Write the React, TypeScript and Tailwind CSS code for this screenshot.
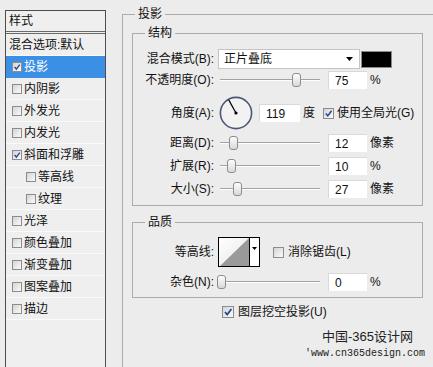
import React from "react";

const styleItems = [
  { label: "投影", checked: true, selected: true },
  { label: "内阴影" },
  { label: "外发光" },
  { label: "内发光" },
  { label: "斜面和浮雕", checked: true },
  { label: "等高线", sub: true },
  { label: "纹理", sub: true },
  { label: "光泽" },
  { label: "颜色叠加" },
  { label: "渐变叠加" },
  { label: "图案叠加" },
  { label: "描边" },
];

const CheckBox = ({ checked = false, size = "w-[10px] h-[10px]" }: { checked?: boolean; size?: string }) => (
  <span
    className={`${size} inline-flex shrink-0 items-center justify-center border border-[#8c8c8c] bg-gradient-to-br from-[#d4d4d4] to-[#fbfbfb]`}
  >
    {checked && (
      <svg viewBox="0 0 10 10" className="h-full w-full">
        <polyline points="2,5 4.2,7.6 8.4,2" fill="none" stroke="#24469a" strokeWidth="1.7" />
      </svg>
    )}
  </span>
);

const GroupTitle = ({ children }: { children: React.ReactNode }) => (
  <div className="-mt-[9px] ml-[12px] w-fit bg-[#ececec] px-[3px] leading-[16px]">{children}</div>
);

const Slider = ({ value }: { value: number }) => (
  <div className="relative ml-[6px] flex h-[20px] w-[100px] shrink-0 items-center">
    <div className="h-[2px] w-full border-t border-b border-t-[#a3a3a3] border-b-white" />
    <div
      className="absolute top-[3px] h-[14px] w-[9px] rounded-[3px] border border-[#8d8d8d] bg-gradient-to-b from-[#fdfdfd] to-[#d9d9d9]"
      style={{ left: `${value - 4}px` }}
    />
  </div>
);

const NumBox = ({ value, w = "w-[39px]", ml = "ml-[8px]" }: { value: string; w?: string; ml?: string }) => (
  <div className={`${ml} ${w} flex h-[18px] shrink-0 items-center border-t border-l border-[#d9d9d9] bg-white pl-[6px]`}>
    {value}
  </div>
);

const Label = ({ children }: { children: React.ReactNode }) => (
  <div className="w-[81px] shrink-0 text-right">{children}</div>
);

const SliderRow = ({ label, value, pos, unit }: { label: string; value: string; pos: number; unit: string }) => (
  <div className="mt-[3px] flex h-[20px] items-center">
    <Label>{label}</Label>
    <Slider value={pos} />
    <NumBox value={value} />
    <span className="ml-[3px]">{unit}</span>
  </div>
);

export default function App() {
  return (
    <div className="flex h-[367px] w-[433px] overflow-hidden bg-[#ececec] font-['Liberation_Sans','Noto_Sans_CJK_SC',sans-serif] text-[12px] text-[#111]">
      {/* style list */}
      <div className="mt-[10px] ml-[5px] h-[370px] w-[101px] shrink-0 border border-[#4d4d4d] bg-[#efefef]">
        <div className="flex h-[23px] items-center border-b-[3px] border-double border-[#6a6a6a] pl-[3px]">样式</div>
        <div className="flex h-[22px] items-center border-b border-[#fafafa] pl-[3px]">混合选项:默认</div>
        {styleItems.map((it) => (
          <div
            key={it.label}
            className={`flex h-[22px] items-center gap-[2px] border-b ${
              it.selected ? "border-[#3b8fe5] bg-[#3b8fe5] text-white" : "border-[#fafafa]"
            } ${it.sub ? "pl-[20px]" : "pl-[6px]"}`}
          >
            <CheckBox checked={it.checked} />
            <span>{it.label}</span>
          </div>
        ))}
      </div>

      {/* drop shadow group */}
      <div className="mt-[14px] ml-[16px] h-[370px] w-[320px] shrink-0 border border-[#ababab]">
        <GroupTitle>投影</GroupTitle>

        <div className="mt-[11px] ml-[9px] h-[173px] w-[291px] border border-[#ababab]">
          <GroupTitle>结构</GroupTitle>

          <div className="mt-[7px] flex h-[22px] items-center">
            <Label>混合模式(B):</Label>
            <div className="ml-[4px] flex h-[20px] w-[142px] shrink-0 items-center justify-between border border-[#c4c4c4] bg-white pr-[6px] pl-[5px]">
              <span>正片叠底</span>
              <svg width="7" height="4" viewBox="0 0 7 4">
                <polygon points="0,0 7,0 3.5,4" fill="#000" />
              </svg>
            </div>
            <div className="ml-[1px] h-[17px] w-[31px] shrink-0 border border-[#8a8a8a] bg-black" />
          </div>

          <div className="flex h-[20px] items-center">
            <Label>不透明度(O):</Label>
            <Slider value={76} />
            <NumBox value="75" />
            <span className="ml-[3px]">%</span>
          </div>

          <div className="mt-[6px] flex h-[34px] items-center">
            <Label>角度(A):</Label>
            <svg width="34" height="34" viewBox="0 0 34 34" className="ml-[5px] shrink-0">
              <circle cx="17" cy="17" r="15.6" fill="#f2f2f2" stroke="#4b5775" strokeWidth="1.6" />
              <line x1="17" y1="17" x2="9.7" y2="3.9" stroke="#000" strokeWidth="1.2" />
              <circle cx="17" cy="17" r="1.6" fill="#000" />
            </svg>
            <NumBox value="119" w="w-[41px]" ml="ml-[6px]" />
            <span className="ml-[3px]">度</span>
            <span className="ml-[8px] flex items-center gap-[3px]">
              <CheckBox checked size="w-[11px] h-[11px]" />
              <span>使用全局光(G)</span>
            </span>
          </div>

          <SliderRow label="距离(D):" value="12" pos={13} unit="像素" />
          <SliderRow label="扩展(R):" value="10" pos={11} unit="%" />
          <SliderRow label="大小(S):" value="27" pos={17} unit="像素" />
        </div>

        <div className="mt-[16px] ml-[9px] h-[76px] w-[291px] border border-[#ababab]">
          <GroupTitle>品质</GroupTitle>

          <div className="mt-[7px] flex h-[30px] items-center">
            <Label>等高线:</Label>
            <div className="ml-[4px] flex h-[30px] w-[42px] shrink-0 border border-black bg-white">
              <svg width="30" height="28" viewBox="0 0 30 28" className="shrink-0">
                <defs>
                  <linearGradient id="cg" x1="0" y1="0" x2="1" y2="1">
                    <stop offset="0" stopColor="#ffffff" />
                    <stop offset="1" stopColor="#e6e6e6" />
                  </linearGradient>
                </defs>
                <rect width="30" height="28" fill="url(#cg)" />
                <polygon points="1,28 30,0 30,28" fill="#9a9a9a" />
              </svg>
              <div className="flex w-[10px] justify-center border-l border-black pt-[9px]">
                <svg width="5" height="3" viewBox="0 0 5 3">
                  <polygon points="0,0 5,0 2.5,3" fill="#000" />
                </svg>
              </div>
            </div>
            <span className="ml-[13px] flex items-center gap-[4px]">
              <CheckBox size="w-[11px] h-[11px]" />
              <span>消除锯齿(L)</span>
            </span>
          </div>

          <div className="mt-[5px] flex h-[20px] items-center">
            <Label>杂色(N):</Label>
            <Slider value={1} />
            <NumBox value="0" />
            <span className="ml-[3px]">%</span>
          </div>
        </div>

        <div className="mt-[6px] ml-[99px] flex h-[16px] items-center gap-[4px]">
          <CheckBox checked size="w-[12px] h-[12px]" />
          <span>图层挖空投影(U)</span>
        </div>

        <div className="mt-[10px] ml-[199px] text-[13px] leading-[14px] text-[#222]">中国-365设计网</div>
        <div className="mt-[4px] ml-[182px] font-['Liberation_Mono',monospace] text-[10px] leading-[12px] text-[#222]">
          'www.cn365design.com
        </div>
      </div>
    </div>
  );
}
